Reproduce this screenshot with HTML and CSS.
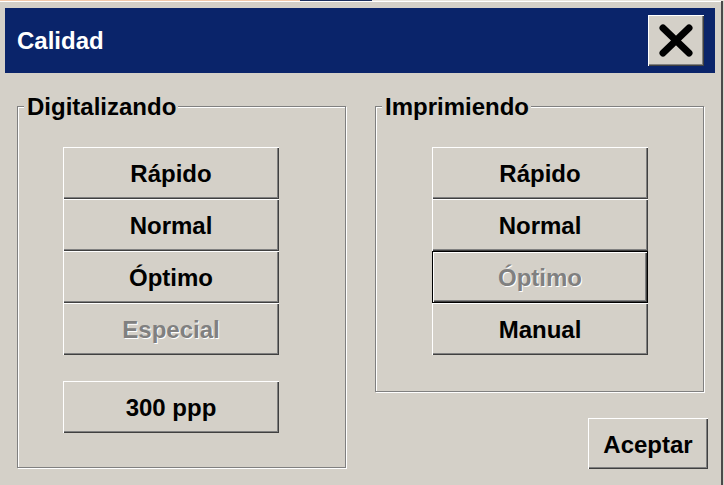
FILE: index.html
```html
<!DOCTYPE html>
<html lang="es">
<head>
<meta charset="utf-8">
<title>Calidad</title>
<link rel="stylesheet" href="styles.css">
</head>
<body>
<div class="screen">
  <div class="topstrip"></div>
  <div class="desk">
    <div class="window">
      <div class="titlebar">
        <span class="title">Calidad</span>
        <button class="close" type="button" aria-label="Cerrar">
          <svg width="36" height="35" viewBox="0 0 36 35" aria-hidden="true">
            <path d="M5 5 L31 30 M31 5 L5 30" stroke="#000" stroke-width="7" stroke-linecap="round" fill="none"/>
          </svg>
        </button>
      </div>
      <div class="content">
        <div class="group group-left">
          <span class="legend">Digitalizando</span>
          <div class="stack stack-left">
            <button class="btn" type="button">Rápido</button>
            <button class="btn" type="button">Normal</button>
            <button class="btn" type="button">Óptimo</button>
            <button class="btn disabled" type="button">Especial</button>
          </div>
          <button class="btn single" type="button">300 ppp</button>
        </div>
        <div class="rightcol">
          <div class="group group-right">
            <span class="legend">Imprimiendo</span>
            <div class="stack stack-right">
              <button class="btn" type="button">Rápido</button>
              <button class="btn" type="button">Normal</button>
              <button class="btn disabled default" type="button">Óptimo</button>
              <button class="btn" type="button">Manual</button>
            </div>
          </div>
          <button class="btn accept" type="button">Aceptar</button>
        </div>
      </div>
    </div>
    <div class="edge"></div>
    <div class="outside"></div>
  </div>
</div>
</body>
</html>
```
FILE: styles.css
```css
* { box-sizing: border-box; }
html, body { margin: 0; padding: 0; }
body {
  background: #d4d0c8;
  font-family: "Liberation Sans", Arial, sans-serif;
  width: 724px;
  height: 485px;
  overflow: hidden;
}
.screen {
  width: 724px;
  height: 485px;
  display: flex;
  flex-direction: column;
}
.topstrip {
  height: 1px;
  background: linear-gradient(to right, #f2c9aa 0, #f2c9aa 300px, #1c2e5c 300px, #1c2e5c 372px, #e8e4dc 372px, #e8e4dc 724px);
}
.desk {
  flex: 1;
  display: flex;
}
.window {
  width: 721px;
  background: #d4d0c8;
  border-top: 1px solid #ffffff;
  padding: 6px 0 0 5px;
}
.edge {
  width: 2px;
  background: #4a4a4a;
}
.outside {
  width: 1px;
  background: #d8d4cc;
}
.titlebar {
  width: 710px;
  height: 65px;
  background: #0a246a;
  display: flex;
  align-items: center;
  justify-content: space-between;
  padding: 0 11px 0 12px;
}
.title {
  color: #ffffff;
  font-weight: bold;
  font-size: 24px;
  line-height: 28px;
}
.close {
  width: 56px;
  height: 51px;
  margin: 0;
  padding: 0;
  border: none;
  background: #d4d0c8;
  box-shadow: inset 1px 1px 0 #ffffff, inset -1px -1px 0 #404040, inset -2px -2px 0 #808080;
  display: flex;
  align-items: center;
  justify-content: center;
}
.close svg { display: block; margin-left: -1px; }
.content {
  display: flex;
  align-items: flex-start;
  margin-top: 33px;
  padding-left: 12px;
}
.group {
  display: flex;
  flex-direction: column;
  align-items: flex-start;
  border: 1px solid #808080;
  box-shadow: 1px 1px 0 #ffffff, inset 1px 1px 0 #ffffff;
}
.group-left {
  width: 329px;
  height: 362px;
}
.group-right {
  width: 329px;
  height: 286px;
}
.legend {
  margin: -14px 0 0 6px;
  padding: 0 2px 0 3px;
  background: #d4d0c8;
  height: 28px;
  font-size: 24px;
  line-height: 28px;
  font-weight: bold;
  color: #000000;
  white-space: nowrap;
}
.stack {
  display: flex;
  flex-direction: column;
  margin-top: 26px;
}
.stack-left { margin-left: 45px; }
.stack-right { margin-left: 56px; }
.btn {
  width: 216px;
  height: 52px;
  margin: 0;
  padding: 2px 0 0 0;
  border: none;
  background: #d4d0c8;
  box-shadow: inset 1px 1px 0 #ffffff, inset -1px -1px 0 #404040, inset -2px -2px 0 #808080;
  font-family: "Liberation Sans", Arial, sans-serif;
  font-weight: bold;
  font-size: 24px;
  line-height: 28px;
  color: #000000;
  text-align: center;
}
.btn.disabled {
  color: #808080;
  text-shadow: 1px 1px 0 #ffffff;
}
.btn.default {
  box-shadow: inset 0 0 0 1px #000000, inset 2px 2px 0 #ffffff, inset -2px -2px 0 #404040, inset -3px -3px 0 #808080;
}
.btn.single {
  margin: 26px 0 0 45px;
}
.rightcol {
  width: 333px;
  margin-left: 29px;
  display: flex;
  flex-direction: column;
  align-items: flex-start;
}
.btn.accept {
  width: 120px;
  height: 51px;
  align-self: flex-end;
  margin-top: 26px;
}
```
